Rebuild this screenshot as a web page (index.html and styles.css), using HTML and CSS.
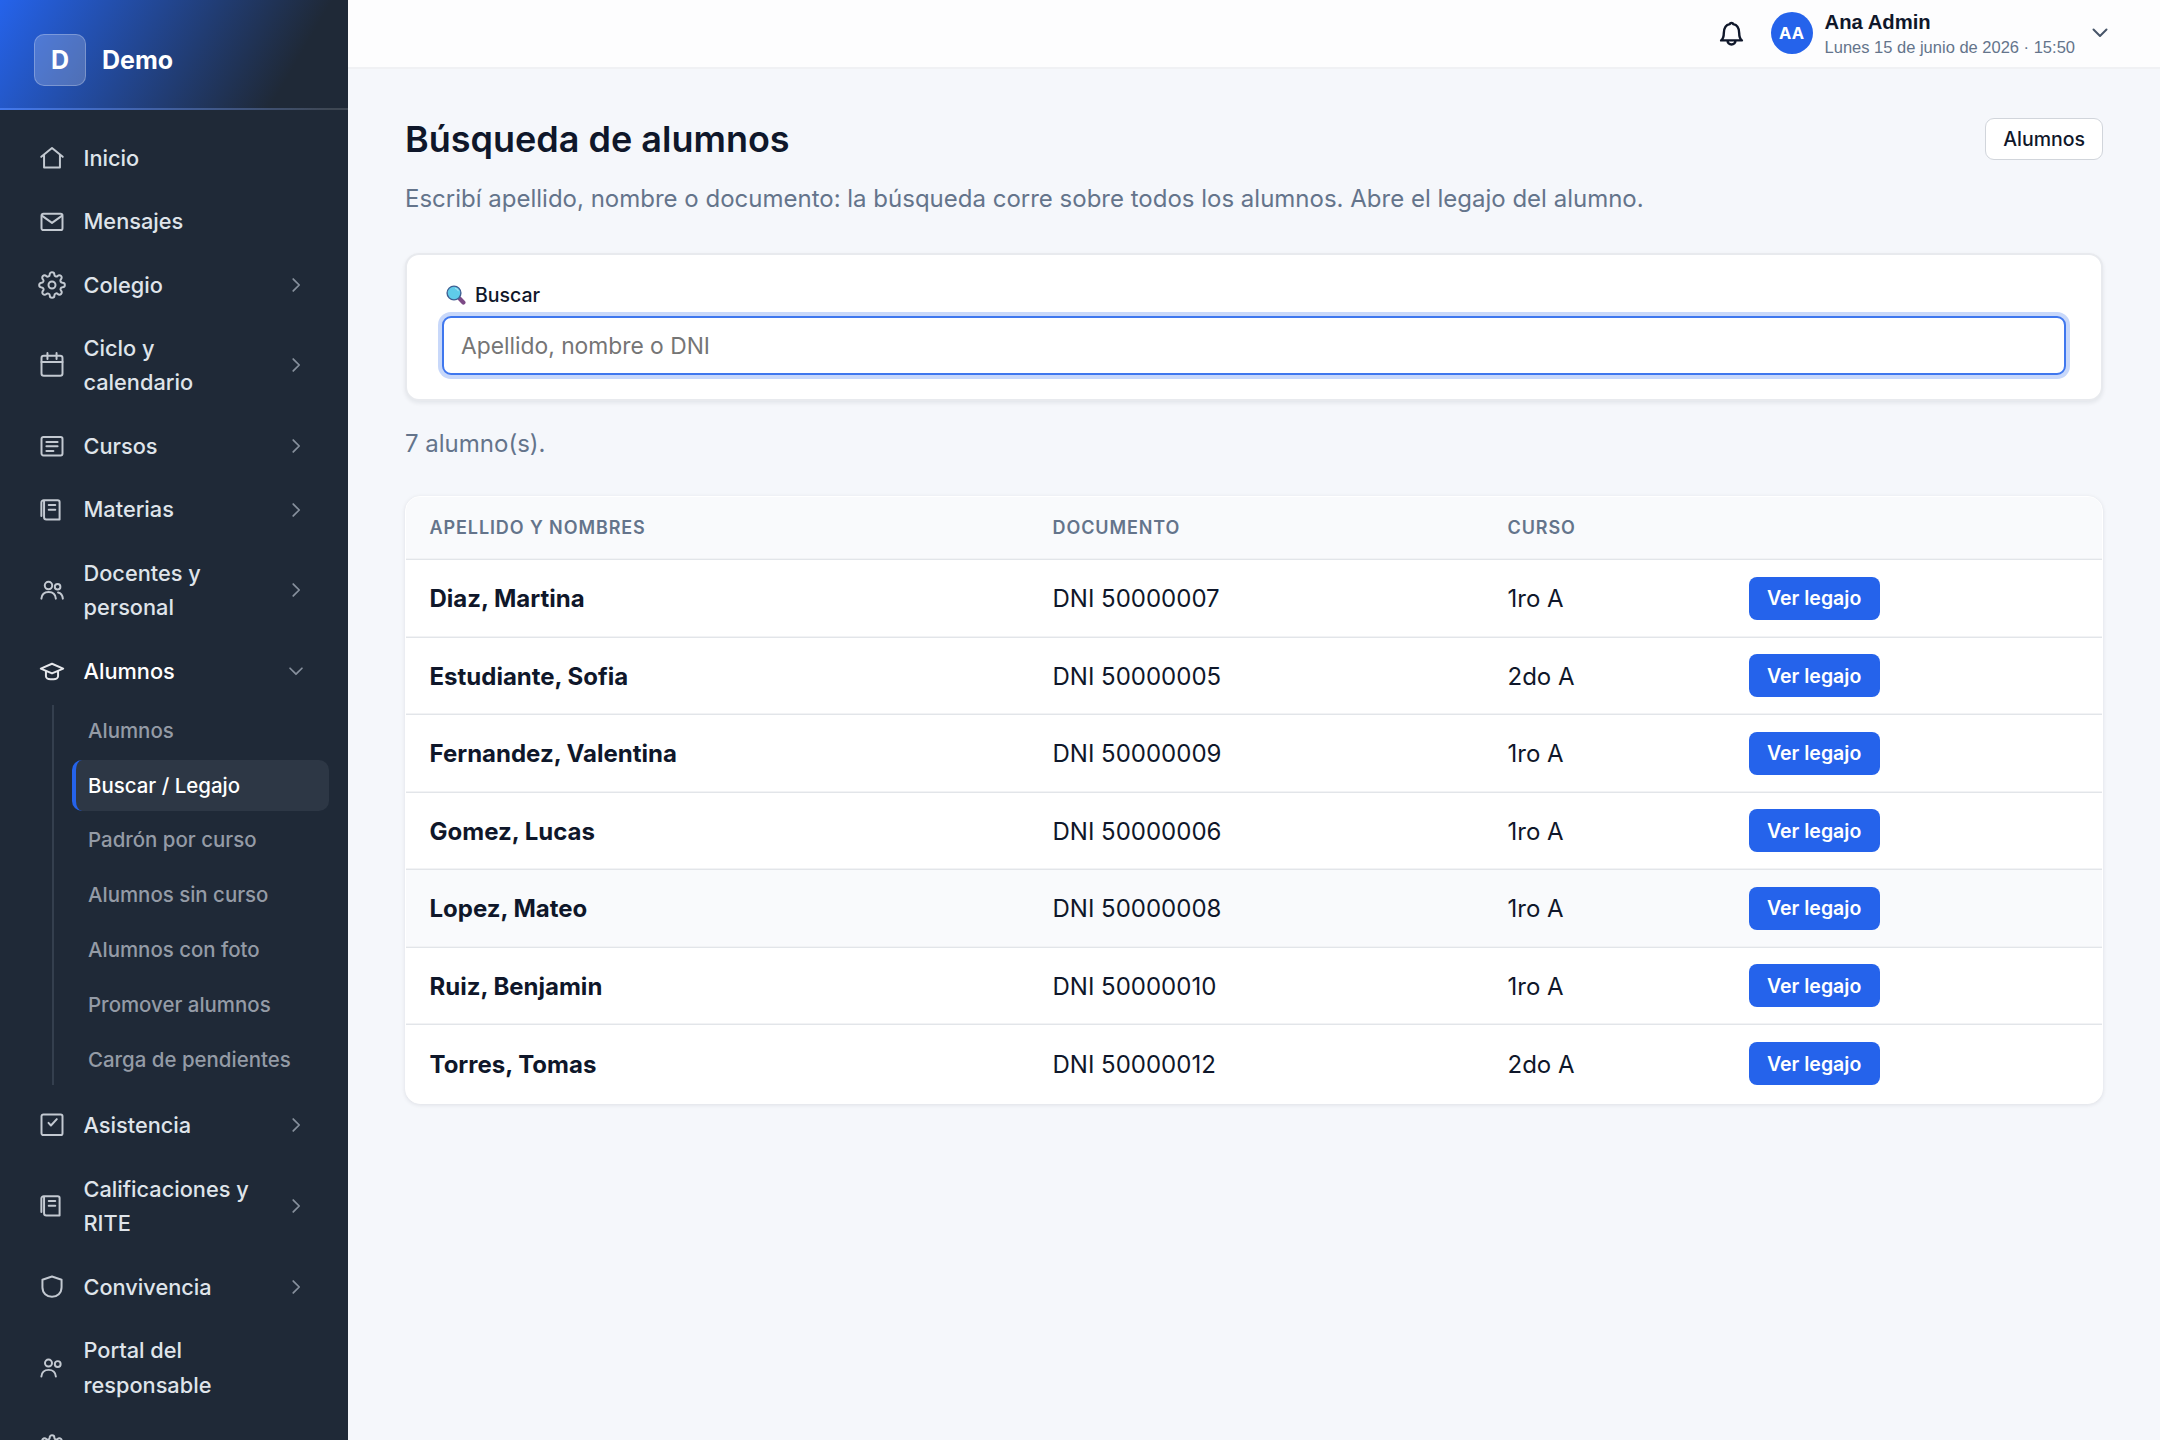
FILE: index.html
```html
<!DOCTYPE html>
<html lang="es">
<head>
<meta charset="utf-8">
<title>Búsqueda de alumnos</title>
<link rel="stylesheet" href="styles.css">
</head>
<body>
<svg class="sprite" aria-hidden="true">
  <symbol id="i-home" viewBox="0 0 24 24"><path d="M2.800 11 12 3.400l9.200 7.600M5.200 9.200V20.200h13.600V9.200"/></symbol>
  <symbol id="i-mail" viewBox="0 0 24 24"><rect x="3" y="5.800" width="18" height="14" rx="1.600"/><path d="m3.600 7.600 8.400 6 8.400-6"/></symbol>
  <symbol id="i-gear" viewBox="0 0 24 24"><circle cx="12" cy="12" r="3"/><path d="M19.400 15a1.650 1.650 0 0 0 .33 1.820l.06.06a2 2 0 0 1 0 2.830 2 2 0 0 1-2.830 0l-.06-.06a1.650 1.650 0 0 0-1.820-.33 1.650 1.650 0 0 0-1 1.510V21a2 2 0 0 1-2 2 2 2 0 0 1-2-2v-.09A1.650 1.650 0 0 0 9 19.400a1.650 1.650 0 0 0-1.820.33l-.06.06a2 2 0 0 1-2.830 0 2 2 0 0 1 0-2.830l.06-.06a1.650 1.650 0 0 0 .33-1.820 1.650 1.650 0 0 0-1.510-1H3a2 2 0 0 1-2-2 2 2 0 0 1 2-2h.09A1.650 1.650 0 0 0 4.600 9a1.650 1.650 0 0 0-.33-1.820l-.06-.06a2 2 0 0 1 0-2.830 2 2 0 0 1 2.830 0l.06.06a1.650 1.650 0 0 0 1.820.33H9a1.650 1.650 0 0 0 1-1.510V3a2 2 0 0 1 2-2 2 2 0 0 1 2 2v.09a1.650 1.650 0 0 0 1 1.510 1.650 1.650 0 0 0 1.820-.33l.06-.06a2 2 0 0 1 2.830 0 2 2 0 0 1 0 2.830l-.06.06a1.650 1.650 0 0 0-.33 1.820V9a1.650 1.650 0 0 0 1.510 1H21a2 2 0 0 1 2 2 2 2 0 0 1-2 2h-.09a1.650 1.650 0 0 0-1.510 1z"/></symbol>
  <symbol id="i-calendar" viewBox="0 0 24 24"><rect x="3" y="4" width="18" height="17.300" rx="2"/><path d="M3 9.400h18M8.100 1.800v5M15.900 1.800v5"/></symbol>
  <symbol id="i-list" viewBox="0 0 24 24"><rect x="3" y="4.300" width="18" height="15.800" rx="1.600"/><path d="M7.200 8.500h9.600M7.200 12.300h9.600M7.200 16.200h6"/></symbol>
  <symbol id="i-book" viewBox="0 0 24 24"><path d="M2.900 17.200V5.600a2 2 0 0 1 2-2h12a1.600 1.600 0 0 1 1.600 1.600v15H7.200a2 2 0 0 1-2-2V3.800M9.200 7.800h5.600M9.200 11.800h5.600"/></symbol>
  <symbol id="i-users" viewBox="0 0 24 24"><circle cx="9" cy="8.200" r="3.200"/><circle cx="16.800" cy="9.200" r="2.400"/><path d="M2.900 19.400c.3-3.700 2.800-5.700 6.200-5.700s5.900 2 6.200 5.700M17.200 14.100c2.500.5 3.800 2.300 4.100 5.300"/></symbol>
  <symbol id="i-family" viewBox="0 0 24 24"><circle cx="9" cy="7.800" r="3"/><circle cx="16.900" cy="8.600" r="2.500"/><path d="M2.900 19.300c.3-3.700 2.800-5.700 6.200-5.700s5.900 2 6.200 5.700"/></symbol>
  <symbol id="i-cap" viewBox="0 0 24 24"><path d="M2.400 10 12 5.800l9.600 4.200-9.600 4.100zM6.800 12.200v4.300c0 1.400 1.700 2.500 3.800 2.500h2.800c2.100 0 3.800-1.100 3.800-2.500v-4.300"/></symbol>
  <symbol id="i-check" viewBox="0 0 24 24"><rect x="3" y="2.900" width="18" height="17.700" rx="1.600"/><path d="m9 10.200 2.100 2.200 5-5.400"/></symbol>
  <symbol id="i-shield" viewBox="0 0 24 24"><path d="m12 3 8.200 2.800v6.400c0 5-3.700 8.200-8.200 8.200s-8.200-3.200-8.200-8.200V5.800z"/></symbol>
  <symbol id="i-chevron" viewBox="0 0 24 24"><path d="m9 5.500 6.500 6.500L9 18.500"/></symbol>
</svg>

<aside class="sidebar">
  <header class="brand"><span class="brand-logo">D</span><span class="brand-name">Demo</span></header>
  <nav class="menu">
    <a class="item"><svg class="icon"><use href="#i-home"/></svg><span class="label">Inicio</span></a>
    <a class="item"><svg class="icon"><use href="#i-mail"/></svg><span class="label">Mensajes</span></a>
    <a class="item"><svg class="icon"><use href="#i-gear"/></svg><span class="label">Colegio</span><svg class="chev"><use href="#i-chevron"/></svg></a>
    <a class="item"><svg class="icon"><use href="#i-calendar"/></svg><span class="label">Ciclo y calendario</span><svg class="chev"><use href="#i-chevron"/></svg></a>
    <a class="item"><svg class="icon"><use href="#i-list"/></svg><span class="label">Cursos</span><svg class="chev"><use href="#i-chevron"/></svg></a>
    <a class="item"><svg class="icon"><use href="#i-book"/></svg><span class="label">Materias</span><svg class="chev"><use href="#i-chevron"/></svg></a>
    <a class="item"><svg class="icon"><use href="#i-users"/></svg><span class="label">Docentes y personal</span><svg class="chev"><use href="#i-chevron"/></svg></a>
    <a class="item open"><svg class="icon"><use href="#i-cap"/></svg><span class="label">Alumnos</span><svg class="chev"><use href="#i-chevron"/></svg></a>
    <div class="submenu">
      <a class="sub">Alumnos</a>
      <a class="sub current">Buscar / Legajo</a>
      <a class="sub">Padrón por curso</a>
      <a class="sub">Alumnos sin curso</a>
      <a class="sub">Alumnos con foto</a>
      <a class="sub">Promover alumnos</a>
      <a class="sub">Carga de pendientes</a>
    </div>
    <a class="item"><svg class="icon"><use href="#i-check"/></svg><span class="label">Asistencia</span><svg class="chev"><use href="#i-chevron"/></svg></a>
    <a class="item"><svg class="icon"><use href="#i-book"/></svg><span class="label">Calificaciones y RITE</span><svg class="chev"><use href="#i-chevron"/></svg></a>
    <a class="item"><svg class="icon"><use href="#i-shield"/></svg><span class="label">Convivencia</span><svg class="chev"><use href="#i-chevron"/></svg></a>
    <a class="item"><svg class="icon"><use href="#i-family"/></svg><span class="label">Portal del responsable</span></a>
    <a class="item"><svg class="icon"><use href="#i-gear"/></svg></a>
  </nav>
</aside>

<div class="page">
  <header class="topbar">
    <svg class="bell" viewBox="0 0 24 24"><path d="M2 18.600c2-1.400 2.600-3.600 2.600-6.800C4.600 6.800 7 3.600 10.400 3c.2-1.400 3-1.400 3.200 0 3.400.6 5.800 3.800 5.800 8.800 0 3.200.6 5.400 2.600 6.800zM8.200 19c0 2 1.600 3.500 3.800 3.500s3.800-1.500 3.800-3.500"/></svg>
    <span class="avatar">AA</span>
    <div class="user"><span class="user-name">Ana Admin</span><span class="user-date">Lunes 15 de junio de 2026 · 15:50</span></div>
    <svg class="user-chev" viewBox="0 0 16 10"><path d="m1.500 1.500 6.500 6.500 6.500-6.500"/></svg>
  </header>
  <main class="content">
    <div class="heading"><h1>Búsqueda de alumnos</h1><a class="btn-outline">Alumnos</a></div>
    <p class="lead">Escribí apellido, nombre o documento: la búsqueda corre sobre todos los alumnos. Abre el legajo del alumno.</p>
    <section class="card">
      <label class="search-label" for="q">
        <svg class="lens" viewBox="0 0 20 20"><path class="handle" d="m13.800 13.800 3.600 3.600"/><circle cx="8" cy="8" r="6.900"/><path class="shine" d="M9.500 3.400q2 .5 2.800 2.300"/></svg>
        Buscar</label>
      <input class="search" id="q" type="text" placeholder="Apellido, nombre o DNI">
    </section>
    <p class="count">7 alumno(s).</p>
    <div class="table-wrap">
      <table>
        <colgroup><col class="c-name"><col class="c-doc"><col class="c-course"><col></colgroup>
        <thead><tr><th>Apellido y nombres</th><th>Documento</th><th>Curso</th><th></th></tr></thead>
        <tbody>
          <tr><td class="name">Diaz, Martina</td><td>DNI 50000007</td><td>1ro A</td><td><a class="btn">Ver legajo</a></td></tr>
          <tr><td class="name">Estudiante, Sofia</td><td>DNI 50000005</td><td>2do A</td><td><a class="btn">Ver legajo</a></td></tr>
          <tr><td class="name">Fernandez, Valentina</td><td>DNI 50000009</td><td>1ro A</td><td><a class="btn">Ver legajo</a></td></tr>
          <tr><td class="name">Gomez, Lucas</td><td>DNI 50000006</td><td>1ro A</td><td><a class="btn">Ver legajo</a></td></tr>
          <tr class="hover"><td class="name">Lopez, Mateo</td><td>DNI 50000008</td><td>1ro A</td><td><a class="btn">Ver legajo</a></td></tr>
          <tr><td class="name">Ruiz, Benjamin</td><td>DNI 50000010</td><td>1ro A</td><td><a class="btn">Ver legajo</a></td></tr>
          <tr><td class="name">Torres, Tomas</td><td>DNI 50000012</td><td>2do A</td><td><a class="btn">Ver legajo</a></td></tr>
        </tbody>
      </table>
    </div>
  </main>
</div>
</body>
</html>
```
FILE: styles.css
```css
* { box-sizing: border-box; }
body {
  margin: 0;
  height: 1440px;
  overflow: hidden;
  display: flex;
  background: #f5f7fb;
  color: #0f172a;
  font-family: Inter, "Liberation Sans", sans-serif;
  font-size: 24px;
}
.sprite { display: none; }
svg { fill: none; stroke: currentColor; stroke-linecap: round; stroke-linejoin: round; flex: none; }

/* Sidebar */
.sidebar {
  width: 348px;
  height: 1440px;
  overflow: hidden;
  flex: none;
  background: #1f2937;
  color: #dfe4ea;
}
.brand {
  height: 110px;
  padding: 11px 34px 0;
  display: flex;
  align-items: center;
  gap: 16px;
  border-bottom: 2px solid rgba(255, 255, 255, .14);
  background: linear-gradient(120deg, #2563eb 0%, #1f2937 81%);
  color: #fff;
  font-weight: 700;
  font-size: 25px;
}
.brand-logo {
  width: 52px;
  height: 52px;
  display: grid;
  place-items: center;
  border: 1.500px solid rgba(255, 255, 255, .25);
  border-radius: 10px;
  background: rgba(255, 255, 255, .2);
}
.menu { padding: 16px 18px 0; display: flex; flex-direction: column; }
.item {
  display: flex;
  align-items: center;
  padding: 14.500px 20px 14.500px 20.500px;
  min-height: 63.500px;
  font-size: 21.750px;
  font-weight: 500;
  line-height: 34.400px;
}
.icon { width: 28px; height: 28px; stroke-width: 1.700; margin: 0 17.500px 0 -.500px; color: #c3c9d1; }
.label { flex: 1; padding-right: 30px; }
.chev { width: 22px; height: 22px; margin-right: 3px; stroke-width: 1.900; color: #87909d; }
.item.open { color: #fff; }
.item.open .icon { color: #e5e7eb; }
.item.open .chev { transform: rotate(90deg); }
.submenu {
  margin: 2px 1.500px 8px 34px;
  padding-left: 18px;
  border-left: 2px solid #343f4e;
  display: flex;
  flex-direction: column;
  gap: 3.400px;
}
.sub {
  height: 51.500px;
  line-height: 51.500px;
  padding-left: 12px;
  border-left: 4.500px solid transparent;
  border-radius: 10px;
  font-size: 20.450px;
  font-weight: 500;
  color: #949ba6;
}
.sub.current { background: #2d3745; border-left-color: #2563eb; color: #fff; }
.submenu + .item { margin-bottom: .500px; }

/* Top bar */
.page { flex: 1; min-width: 0; }
.topbar {
  height: 69px;
  padding: 0 52px 2px 0;
  display: flex;
  align-items: center;
  justify-content: flex-end;
  background: #fdfdfe;
  border-bottom: 2px solid #f0f1f4;
}
.bell { width: 25px; height: 25px; stroke-width: 2.300; margin: 2px 27px 0 0; }
.avatar {
  width: 42px;
  height: 42px;
  margin-right: 12px;
  display: grid;
  place-items: center;
  border-radius: 50%;
  background: #2563eb;
  color: #fff;
  font-size: 16.500px;
  font-weight: 700;
}
.user { display: flex; flex-direction: column; padding-top: 5px; font-family: "Liberation Sans", Arial, sans-serif; }
.user-name { font-size: 20.250px; font-weight: 700; line-height: 25px; }
.user-date { font-size: 16.500px; line-height: 25px; color: #64748b; }
.user-chev { width: 16px; height: 10px; margin-left: 17px; stroke-width: 2; color: #475569; }

/* Content */
.content { padding: 49px 57px 0; }
.heading { display: flex; justify-content: space-between; align-items: center; height: 42px; }
h1 { margin: 0; font-size: 36px; font-weight: 600; line-height: 43px; }
.btn-outline {
  height: 42px;
  padding: 0 17px;
  display: flex;
  align-items: center;
  border: 1.500px solid #d1d5db;
  border-radius: 9px;
  background: #fff;
  font-size: 19.500px;
  font-weight: 500;
}
.lead, .count { margin: 0; line-height: 36px; color: #64748b; }
.lead { margin-top: 21px; }
.card {
  height: 148px;
  margin-top: 36px;
  padding: 28px 35px 0;
  background: #fff;
  border: 2px solid #e8eaee;
  border-radius: 14px;
  box-shadow: 0 2px 4px rgba(15, 23, 42, .08);
}
.search-label {
  display: flex;
  align-items: center;
  gap: 9px;
  height: 24px;
  margin-bottom: 9px;
  padding-left: 4px;
  font-size: 19.500px;
  font-weight: 500;
}
.lens { width: 20px; height: 20px; }
.lens circle { fill: #5fcbe9; stroke: #3f5f92; stroke-width: 1.400; }
.lens .handle { stroke: #7d4a86; stroke-width: 4.200; }
.lens .shine { stroke: #9fe0f2; stroke-width: 1.200; }
.search {
  display: block;
  width: 100%;
  height: 59px;
  padding: 0 17px;
  border: 2px solid #3f77ee;
  border-radius: 9px;
  outline: none;
  box-shadow: 0 0 0 4px #c8d8fa;
  font: 22.800px Inter, "Liberation Sans", sans-serif;
}
.search::placeholder { color: #757575; opacity: 1; }
.count { margin-top: 25px; }

/* Table */
.table-wrap {
  height: 608px;
  margin-top: 34px;
  overflow: hidden;
  border: 1px solid #fff;
  border-radius: 15px;
  background: #fff;
  box-shadow: 0 1px 4px rgba(15, 23, 42, .1);
}
table { width: 100%; border-collapse: separate; border-spacing: 0; table-layout: fixed; }
.c-name { width: 623px; }
.c-doc { width: 455px; }
.c-course { width: 241px; }
th {
  height: 63px;
  padding: 0 23px 2px 23.500px;
  text-align: left;
  background: #f9fafc;
  border-bottom: 1px solid #e2e5e9;
  box-shadow: inset 0 -1px #f2f3f5;
  color: #64748b;
  font-size: 18px;
  font-weight: 600;
  letter-spacing: .9px;
  text-transform: uppercase;
}
td {
  height: 77.500px;
  padding: 1px 23px 0 23.500px;
  border-bottom: 1px solid #e2e5e9;
  box-shadow: inset 0 -1px #f2f3f5;
}
td:last-child { padding-top: 0; }
tbody tr:last-child td { border-bottom: 0; box-shadow: none; }
.name { font-weight: 700; }
.hover td { background: #f9fafc; }
.btn {
  display: inline-flex;
  align-items: center;
  height: 43px;
  padding: 0 18.500px;
  border-radius: 8px;
  background: #2563eb;
  color: #fff;
  font-size: 19.500px;
  font-weight: 600;
  vertical-align: middle;
}
```
